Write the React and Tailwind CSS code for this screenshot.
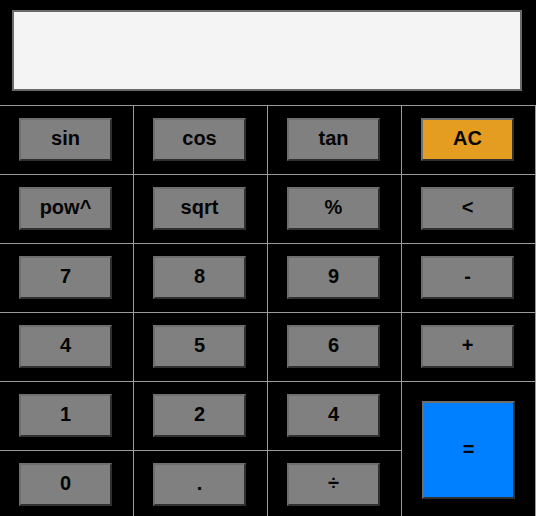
import React from "react";

const btnBase =
  "flex items-center justify-center pb-[3px] border-2 border-t-[#6e6e6e] border-l-[#6e6e6e] border-b-[#303030] border-r-[#303030] text-[20px] font-bold text-[#050505] leading-none";

function Cell({ children, className = "pt-[12px]" }) {
  return (
    <div className={"flex items-start justify-start pl-[19px] border-r border-b border-[#9a9a9a] " + className}>
      {children}
    </div>
  );
}

function Btn({ label, color = "bg-[#808080]", size = "w-[93px] h-[43px]" }) {
  return <button className={`${btnBase} ${color} ${size}`}>{label}</button>;
}

export default function App() {
  const rows = [
    ["sin", "cos", "tan", "AC"],
    ["pow^", "sqrt", "%", "<"],
    ["7", "8", "9", "-"],
    ["4", "5", "6", "+"],
  ];
  return (
    <div
      className="w-[536px] h-[516px] overflow-hidden bg-black"
      style={{ fontFamily: '"Liberation Sans", Arial, sans-serif' }}
    >
      <div className="h-[105px] pt-[10px] pl-[12px]">
        <div className="w-[510px] h-[81px] bg-[#f4f4f4] border-2 border-[#6a6a6a]" />
      </div>
      <div className="grid grid-cols-[134px_134px_134px_134px] grid-rows-[69px_69px_69px_69px_69px_69px] border-t border-[#9a9a9a]">
        {rows.map((r, i) =>
          r.map((l, j) => (
            <Cell key={`${i}-${j}`}>
              <Btn label={l} color={l === "AC" ? "bg-[#e49c21]" : "bg-[#808080]"} />
            </Cell>
          ))
        )}
        <Cell><Btn label="1" /></Cell>
        <Cell><Btn label="2" /></Cell>
        <Cell><Btn label="4" /></Cell>
        <Cell className="row-span-2 pt-[19px] pl-[20px]">
          <Btn label="=" color="bg-[#0080ff]" size="w-[93px] h-[98px]" />
        </Cell>
        <Cell><Btn label="0" /></Cell>
        <Cell><Btn label="." /></Cell>
        <Cell><Btn label="÷" /></Cell>
      </div>
    </div>
  );
}
